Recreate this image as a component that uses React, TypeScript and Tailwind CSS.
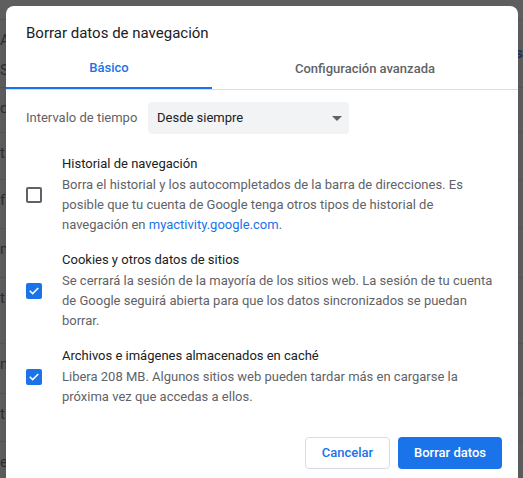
import { useState } from 'react';

type Item = {
  title: string;
  desc: React.ReactNode;
  checked: boolean;
};

const items: Item[] = [
  {
    title: 'Historial de navegación',
    desc: (
      <>
        Borra el historial y los autocompletados de la barra de direcciones. Es posible que tu cuenta de
        Google tenga otros tipos de historial de navegación en{' '}
        <span className="text-[#1a73e8]">myactivity.google.com</span>.
      </>
    ),
    checked: false,
  },
  {
    title: 'Cookies y otros datos de sitios',
    desc: 'Se cerrará la sesión de la mayoría de los sitios web. La sesión de tu cuenta de Google seguirá abierta para que los datos sincronizados se puedan borrar.',
    checked: true,
  },
  {
    title: 'Archivos e imágenes almacenados en caché',
    desc: 'Libera 208 MB. Algunos sitios web pueden tardar más en cargarse la próxima vez que accedas a ellos.',
    checked: true,
  },
];

// rows of the settings page that sits behind the dim overlay
const backRows = [
  { h: 'h-[20px]', left: [] as string[], right: '' },
  { h: 'h-[68px]', left: ['A', 'S'], right: 's' },
  { h: 'h-[45px]', left: ['d'], right: '' },
  { h: 'h-[47px]', left: ['t'], right: '' },
  { h: 'h-[49px]', left: ['f'], right: '' },
  { h: 'h-[49px]', left: ['n'], right: '' },
  { h: 'h-[66px]', left: ['t'], right: '' },
  { h: 'h-[50px]', left: ['n'], right: '' },
  { h: 'h-[48px]', left: ['t'], right: '' },
  { h: 'h-[40px]', left: ['e'], right: '' },
];

function Checkbox({ checked, onToggle }: { checked: boolean; onToggle: () => void }) {
  return (
    <button
      onClick={onToggle}
      className={`flex h-4 w-4 shrink-0 items-center justify-center rounded-[2px] ${
        checked ? 'bg-[#1a73e8]' : 'border-2 border-[#5f6368] bg-white'
      }`}
    >
      {checked && (
        <svg width="12" height="12" viewBox="0 0 24 24" fill="none">
          <path d="M4.5 12.5l4.8 4.8L19.5 7" stroke="white" strokeWidth="3" strokeLinecap="square" />
        </svg>
      )}
    </button>
  );
}

export default function App() {
  const [checks, setChecks] = useState(items.map((i) => i.checked));

  return (
    <div className="relative h-[478px] w-[523px] overflow-hidden bg-[#5e5e5e] font-['Roboto',sans-serif]">
      {/* Page behind the dialog */}
      <div className="flex flex-col">
        {backRows.map((r, i) => (
          <div key={i} className={`${r.h} flex items-start justify-between border-b border-[#555555]`}>
            <div className="flex flex-col pt-[5px] text-[15px] leading-[30px] text-[#2e2e2e]">
              {r.left.map((l, j) => (
                <span key={j}>{l}</span>
              ))}
            </div>
            {r.right && <span className="pt-[22px] text-[15px] font-bold text-[#1d3257]">{r.right}</span>}
          </div>
        ))}
      </div>

      {/* Dialog */}
      <div className="absolute left-[6px] top-[6px] w-[512px] rounded-lg bg-white pb-4 shadow-xl">
        <h1 className="px-5 pt-[17px] text-[15px] leading-5 text-[#202124]">Borrar datos de navegación</h1>

        <div className="mt-[6px] flex border-b border-[#dadce0] text-[13px] font-medium">
          <div className="flex h-[40px] w-[206px] flex-col">
            <span className="flex flex-1 items-center justify-center text-[#1a73e8]">Básico</span>
            <span className="h-[2px] bg-[#1a73e8]" />
          </div>
          <div className="flex h-[40px] flex-1 items-center justify-center text-[#5f6368]">
            Configuración avanzada
          </div>
        </div>

        <div className="mt-3 flex items-center px-5 text-[13px]">
          <span className="w-[122px] text-[#5f6368]">Intervalo de tiempo</span>
          <div className="flex h-8 w-[201px] items-center justify-between rounded bg-[#f1f3f4] pl-[9px] pr-[7px] text-[#202124]">
            <span>Desde siempre</span>
            <svg width="10" height="5" viewBox="0 0 10 5">
              <path d="M0 0h10L5 5z" fill="#5f6368" />
            </svg>
          </div>
        </div>

        <div className="mt-[20px] flex flex-col gap-[15px] px-5">
          {items.map((item, i) => (
            <div key={item.title} className="flex items-center gap-5">
              <Checkbox
                checked={checks[i]}
                onToggle={() => setChecks((c) => c.map((v, j) => (j === i ? !v : v)))}
              />
              <div className="text-[13px] leading-5">
                <div className="text-[#202124]">{item.title}</div>
                <p className="mt-px text-[#5f6368]">{item.desc}</p>
              </div>
            </div>
          ))}
        </div>

        <div className="mt-[30px] flex justify-end gap-2 pr-4 text-[13px] font-medium">
          <button className="h-8 w-[85px] rounded border border-[#dadce0] text-[#1a73e8]">Cancelar</button>
          <button className="h-8 w-[104px] rounded bg-[#1a73e8] text-white">Borrar datos</button>
        </div>
      </div>
    </div>
  );
}
